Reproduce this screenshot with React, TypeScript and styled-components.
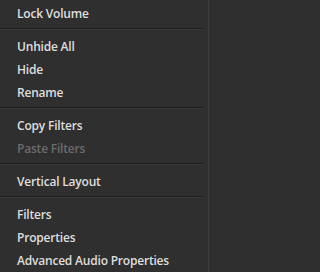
import React from "react";
import styled, { createGlobalStyle } from "styled-components";

const GlobalStyle = createGlobalStyle`
  html, body {
    margin: 0;
    padding: 0;
    background: #2f2f2f;
  }
`;

type Entry = { label: string; disabled?: boolean } | "sep";

const entries: Entry[] = [
  { label: "Lock Volume" },
  "sep",
  { label: "Unhide All" },
  { label: "Hide" },
  { label: "Rename" },
  "sep",
  { label: "Copy Filters" },
  { label: "Paste Filters", disabled: true },
  "sep",
  { label: "Vertical Layout" },
  "sep",
  { label: "Filters" },
  { label: "Properties" },
  { label: "Advanced Audio Properties" },
];

const App = () => {
  return (
    <>
      <GlobalStyle />
      <Menu>
        {entries.map((e, i) =>
          e === "sep" ? (
            <Separator key={i} />
          ) : (
            <Item key={i} $disabled={e.disabled}>
              {e.label}
            </Item>
          )
        )}
      </Menu>
    </>
  );
};

const Menu = styled.div`
  width: 209px;
  height: 272px;
  box-sizing: border-box;
  padding-top: 2px;
  display: flex;
  flex-direction: column;
  background: #2f2f2f;
  border-right: 1px solid #3c3c3c;
  font-family: "Open Sans", "Noto Sans", sans-serif;
  overflow: hidden;
`;

const Item = styled.div<{ $disabled?: boolean }>`
  height: 23px;
  flex-shrink: 0;
  display: flex;
  align-items: center;
  padding-left: 17px;
  font-size: 12px;
  font-weight: 600;
  letter-spacing: -0.2px;
  color: ${(p) => (p.$disabled ? "#6b6b6b" : "#dedede")};
  white-space: nowrap;
`;

const Separator = styled.div`
  height: 10px;
  flex-shrink: 0;
  box-sizing: border-box;
  padding-top: 3px;
  margin-right: 4px;

  &::before {
    content: "";
    display: block;
    height: 1px;
    background: #1d1d1d;
    border-bottom: 1px solid #3a3a3a;
  }
`;

export default App;
